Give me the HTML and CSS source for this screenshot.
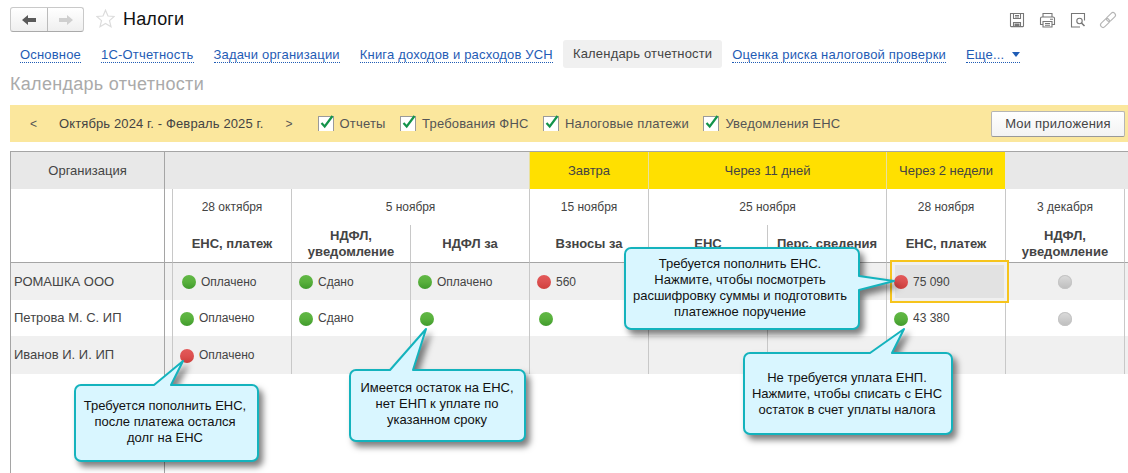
FILE: index.html
```html
<!DOCTYPE html>
<html lang="ru">
<head>
<meta charset="utf-8">
<title>Налоги</title>
<link rel="stylesheet" href="styles.css">
</head>
<body>
<header class="top">
  <div class="nav">
    <button class="nav-btn nav-back"><svg width="14" height="12" viewBox="0 0 14 12"><path d="M0 6 6 1v3h8v4H6v3z" fill="#5a5a5a"/></svg></button>
    <button class="nav-btn"><svg width="14" height="12" viewBox="0 0 14 12"><path d="M14 6 8 1v3H0v4h8v3z" fill="#cfcfcf"/></svg></button>
  </div>
  <svg class="star" width="19" height="19" viewBox="0 0 19 19"><path d="M9.500 1.200 12 7l6.200.5-4.700 4.100 1.500 6.100-5.500-3.300-5.500 3.300 1.500-6.100L.8 7.500 7 7z" fill="#fff" stroke="#dcdcdc" stroke-width="1.200"/></svg>
  <h1 class="title">Налоги</h1>
  <div class="tools">
    <svg width="16" height="16" viewBox="0 0 16 16" fill="none" stroke="#777" stroke-width="1.100"><path d="M1.500 1.500h13v12.500a.6.6 0 0 1-.6.6H2.100a.6.6 0 0 1-.6-.6z"/><path d="M4.500 1.500v5h7v-5M4.500 14.500v-4h7v4M6 3.500h4M6 5h4"/><rect x="5.500" y="11.500" width="5" height="3" fill="#777" stroke="none"/></svg>
    <svg width="17" height="16" viewBox="0 0 17 16" fill="none" stroke="#777" stroke-width="1.100"><path d="M4 5V1.500h9V5M4 12.500H1.500V6.500a1.500 1.500 0 0 1 1.500-1.500h11a1.500 1.500 0 0 1 1.500 1.500v6H13"/><path d="M4 9.500h9v5.500H4zM6 11.500h5M6 13.300h5M11 7.300h3"/></svg>
    <svg width="16" height="16" viewBox="0 0 16 16" fill="none" stroke="#777" stroke-width="1.100"><path d="M10 15H1.500V1.500h13v7"/><circle cx="9.500" cy="9" r="2.700"/><path d="m11.500 11 3 3" stroke-width="1.600"/></svg>
    <svg class="chain" width="16" height="16" viewBox="0 0 16 16" fill="none" stroke="#b5b5b5" stroke-width="1.100"><g transform="rotate(-45 8 8)"><rect x="-1.500" y="5.500" width="10.500" height="5" rx="2.500"/><rect x="7" y="5.500" width="10.500" height="5" rx="2.500"/></g></svg>
  </div>
</header>

<nav class="tabs">
  <div class="tab"><span class="link">Основное</span></div>
  <div class="tab"><span class="link">1С-Отчетность</span></div>
  <div class="tab"><span class="link">Задачи организации</span></div>
  <div class="tab"><span class="link">Книга доходов и расходов УСН</span></div>
  <div class="tab tab-active">Календарь отчетности</div>
  <div class="tab"><span class="link">Оценка риска налоговой проверки</span></div>
  <div class="tab"><span class="link link-more">Еще...<i class="caret"></i></span></div>
</nav>

<h2 class="heading">Календарь отчетности</h2>

<section class="bar">
  <span class="arrow">&lt;</span>
  <span class="period">Октябрь 2024 г. - Февраль 2025 г.</span>
  <span class="arrow arrow-next">&gt;</span>
  <label class="check"><svg class="box" width="18" height="18" viewBox="0 0 18 18"><rect x="0.500" y="3.500" width="15" height="15" fill="#fff" stroke="#9a9a9a"/><path d="m3.500 10 3.200 3.500L14.500 3" fill="none" stroke="#13934a" stroke-width="2.200"/></svg>Отчеты</label>
  <label class="check"><svg class="box" width="18" height="18" viewBox="0 0 18 18"><rect x="0.500" y="3.500" width="15" height="15" fill="#fff" stroke="#9a9a9a"/><path d="m3.500 10 3.200 3.500L14.500 3" fill="none" stroke="#13934a" stroke-width="2.200"/></svg>Требования ФНС</label>
  <label class="check"><svg class="box" width="18" height="18" viewBox="0 0 18 18"><rect x="0.500" y="3.500" width="15" height="15" fill="#fff" stroke="#9a9a9a"/><path d="m3.500 10 3.200 3.500L14.500 3" fill="none" stroke="#13934a" stroke-width="2.200"/></svg>Налоговые платежи</label>
  <label class="check"><svg class="box" width="18" height="18" viewBox="0 0 18 18"><rect x="0.500" y="3.500" width="15" height="15" fill="#fff" stroke="#9a9a9a"/><path d="m3.500 10 3.200 3.500L14.500 3" fill="none" stroke="#13934a" stroke-width="2.200"/></svg>Уведомления ЕНС</label>
  <button class="apps">Мои приложения</button>
</section>

<main class="cal">
  <div class="c hd dark org-h">Организация</div>
  <div class="c hd dark s4"></div>
  <div class="c hd hot">Завтра</div>
  <div class="c hd hot s2">Через 11 дней</div>
  <div class="c hd hot">Через 2 недели</div>
  <div class="c hd s2"></div>

  <div class="c dark r2 name-blank"></div>
  <div class="c dark r2 gut"></div>
  <div class="c date">28 октября</div>
  <div class="c date s2">5 ноября</div>
  <div class="c date">15 ноября</div>
  <div class="c date s2">25 ноября</div>
  <div class="c date">28 ноября</div>
  <div class="c date">3 декабря</div>
  <div class="c date"></div>

  <div class="c nm">ЕНС, платеж</div>
  <div class="c nm">НДФЛ, уведомление</div>
  <div class="c nm">НДФЛ за</div>
  <div class="c nm">Взносы за</div>
  <div class="c nm">ЕНС</div>
  <div class="c nm">Перс. сведения</div>
  <div class="c nm">ЕНС, платеж</div>
  <div class="c nm">НДФЛ, уведомление</div>
  <div class="c nm"></div>

  <div class="c dark org alt">РОМАШКА ООО</div>
  <div class="c dark alt"></div>
  <div class="c v alt wide"><i class="dot green"></i>Оплачено</div>
  <div class="c v alt"><i class="dot green"></i>Сдано</div>
  <div class="c v alt"><i class="dot green"></i>Оплачено</div>
  <div class="c v alt"><i class="dot red"></i>560</div>
  <div class="c v alt"></div>
  <div class="c v alt"></div>
  <div class="c v alt"><span class="focus"></span><i class="dot red"></i><span class="over">75 090</span></div>
  <div class="c v alt mid"><i class="dot grey"></i></div>
  <div class="c alt"></div>

  <div class="c dark org">Петрова М. С. ИП</div>
  <div class="c dark"></div>
  <div class="c v"><i class="dot green"></i>Оплачено</div>
  <div class="c v"><i class="dot green"></i>Сдано</div>
  <div class="c v wide"><i class="dot green"></i></div>
  <div class="c v wide"><i class="dot green"></i></div>
  <div class="c v"></div>
  <div class="c v"></div>
  <div class="c v"><i class="dot green"></i>43 380</div>
  <div class="c v mid"><i class="dot grey"></i></div>
  <div class="c"></div>

  <div class="c dark org alt">Иванов И. И. ИП</div>
  <div class="c dark alt"></div>
  <div class="c v alt"><i class="dot red"></i>Оплачено</div>
  <div class="c v alt"></div>
  <div class="c v alt"></div>
  <div class="c v alt"></div>
  <div class="c v alt"></div>
  <div class="c v alt"></div>
  <div class="c v alt"></div>
  <div class="c v alt"></div>
  <div class="c alt"></div>

  <div class="c dark"></div>
  <div class="c dark"></div>
</main>

<aside class="callout co-a">
  <svg width="200" height="110" viewBox="0 0 200 110"><path d="M7 26H80L109 2 97 26H178a6 6 0 0 1 6 6V96a6 6 0 0 1-6 6H7a6 6 0 0 1-6-6V32a6 6 0 0 1 6-6z"/></svg>
  <p class="co-text">Требуется пополнить ЕНС,<br>после платежа остался<br>долг на ЕНС</p>
</aside>
<aside class="callout co-b">
  <svg width="190" height="122" viewBox="0 0 190 122"><path d="M7 42H41L77 1 64 42H170a6 6 0 0 1 6 6V107a6 6 0 0 1-6 6H7a6 6 0 0 1-6-6V48a6 6 0 0 1 6-6z"/></svg>
  <p class="co-text">Имеется остаток на ЕНС,<br>нет ЕНП к уплате по<br>указанном сроку</p>
</aside>
<aside class="callout co-c">
  <svg width="222" height="115" viewBox="0 0 222 115"><path d="M7 25H127L161 1 149 25H203a6 6 0 0 1 6 6V100a6 6 0 0 1-6 6H7a6 6 0 0 1-6-6V31a6 6 0 0 1 6-6z"/></svg>
  <p class="co-text">Не требуется уплата ЕНП.<br>Нажмите, чтобы списать с ЕНС<br>остаток в счет уплаты налога</p>
</aside>
<aside class="callout co-d">
  <svg width="280" height="92" viewBox="0 0 280 92"><path d="M7 1H229a6 6 0 0 1 6 6V29L270 34 235 43V76a6 6 0 0 1-6 6H7a6 6 0 0 1-6-6V7a6 6 0 0 1 6-6z"/></svg>
  <p class="co-text">Требуется пополнить ЕНС.<br>Нажмите, чтобы посмотреть<br>расшифровку суммы и подготовить<br>платежное поручение</p>
</aside>
</body>
</html>
```
FILE: styles.css
```css
* { box-sizing: border-box; }
html, body { height: 100%; }
body {
  margin: 0;
  display: flex;
  flex-direction: column;
  overflow: hidden;
  position: relative;
  background: #fff;
  color: #444;
  font: 13px/16px "Liberation Sans", Arial, sans-serif;
}

/* top */
.top { flex: none; height: 40px; display: flex; align-items: flex-start; padding: 7px 12px 0 10px; }
.nav {
  display: flex; width: 74px; height: 25px;
  border: 1px solid #c9c9c9; border-bottom-color: #aaa; border-radius: 3px;
  background: linear-gradient(#fff, #efefef);
}
.nav-btn {
  flex: 1; padding: 0; border: 0; background: none;
  display: flex; align-items: center; justify-content: center;
}
.nav-back { flex: none; width: 37px; border-right: 1px solid #bbb; }
.star { margin: 2px 0 0 12px; }
.title { margin: 0 0 0 8px; font-size: 18px; line-height: 24px; font-weight: 400; color: #111; letter-spacing: .15px; }
.tools { margin-left: auto; display: flex; gap: 14px; padding-top: 5px; }
.chain { overflow: visible; }

/* tabs */
.tabs { flex: none; height: 28px; display: flex; padding-left: 10px; letter-spacing: .18px; }
.tab { padding: 0 10px; display: flex; align-items: center; white-space: nowrap; }
.tab-active { background: #f0f0f0; border-radius: 3px; }
.link { color: #1f5cb5; border-bottom: 1px dotted #1f5cb5; line-height: 15px; margin-top: 1px; }
.link-more { display: flex; align-items: center; gap: 8px; }
.caret { width: 0; height: 0; border: 4px solid transparent; border-top: 5px solid #1f5cb5; border-bottom: 0; }

.heading { flex: none; margin: 0; height: 37px; padding: 5px 0 0 10px; font-size: 18px; line-height: 22px; font-weight: 400; color: #aaa; letter-spacing: .3px; }

/* filter bar */
.bar { flex: none; height: 37px; margin-left: 10px; display: flex; align-items: center; padding: 0 3px 0 20px; background: #fbe79d; color: #555; letter-spacing: .12px; }
.arrow { width: 6px; font-size: 12px; }
.period { margin-left: 23px; color: #444; }
.arrow-next { margin-left: 22px; }
.check { display: flex; align-items: center; margin-left: 26px; letter-spacing: .18px; }
.check + .check { margin-left: 14.5px; }
.box { margin: -3px 4px 0 0; }
.apps {
  margin-left: auto; width: 134px; height: 26px; padding: 0;
  border: 1px solid #b5b5b5; border-bottom-color: #999; border-radius: 2px;
  background: linear-gradient(#fff, #f3f3f3);
  color: #444; font: inherit; letter-spacing: .2px;
}

/* table */
.cal {
  flex: 1; margin-top: 9px; min-height: 0;
  display: grid;
  grid-template-columns: 154px 8px repeat(8, 119px) 1fr;
  grid-template-rows: 37px 36px 38px 37px 36px 38px 1fr;
  border-top: 1px solid #a5a5a5;
  margin-left: 10px;
}
.c { border-left: 1px solid #c8c8c8; min-width: 0; }
.dark { border-left-color: #a5a5a5; }
.s2 { grid-column: span 2; }
.s4 { grid-column: span 4; }
.r2 { grid-row: span 2; border-bottom: 1px solid #a5a5a5; }
.hd { background: #e8e8e8; display: flex; align-items: center; justify-content: center; border-left-color: #e8e8e8; }
.hd.dark { border-left-color: #a5a5a5; }
.hot { background: #ffe000; border-left-color: #e8e0a0; }
.date { display: flex; align-items: center; justify-content: center; font-size: 12px; }
.nm {
  display: flex; align-items: center; justify-content: center;
  padding: 0 4px; text-align: center; line-height: 16px; font-weight: 700;
  border-bottom: 1px solid #a5a5a5;
}
.alt { background: #f0f0f0; }
.org { display: flex; align-items: center; padding-left: 3px; font-size: 13px; }
.v { display: flex; align-items: center; padding-left: 7px; font-size: 12px; position: relative; }
.wide { padding-left: 9px; }
.mid { justify-content: center; padding-left: 0; }
.dot {
  flex: none; width: 14px; height: 14px; margin: 1px 5px 0 0; border-radius: 50%;
  position: relative; z-index: 2;
}
.mid .dot { margin-right: 0; }
.green { background: linear-gradient(#62b846 0, #58b03c 50%, #3f9a2c 100%); }
.red { background: linear-gradient(#e35a5a 0, #dc4f4f 50%, #cf3f3c 100%); }
.grey { background: linear-gradient(#dcdcdc, #bdbdbd); box-shadow: inset 0 0 0 1px #c4c4c4; }
.over { position: relative; z-index: 2; }
.focus {
  position: absolute; left: 3px; top: -3px; width: 119px; height: 43px; z-index: 1;
  border: 2px solid #f6c41c;
  background: #e2e2e2;
  box-shadow: inset 0 0 0 3px #f0f0f0;
}

/* callouts */
.callout { position: absolute; margin: 0; color: #111; font-size: 13px; line-height: 16px; z-index: 3; }
.callout svg { display: block; overflow: visible; filter: drop-shadow(4px 5px 3px rgba(0,0,0,.5)); }
.callout path { fill: #d9f6ff; stroke: #14b3bd; stroke-width: 2; stroke-linejoin: round; }
.co-text { position: absolute; margin: 0; text-align: center; white-space: nowrap; }
.co-a { left: 74px; top: 359px; }
.co-a .co-text { left: 1px; width: 180px; top: 39px; }
.co-b { left: 349px; top: 328px; }
.co-b .co-text { left: 1px; width: 174px; top: 52px; }
.co-c { left: 743px; top: 328px; }
.co-c .co-text { left: 1px; width: 206px; top: 42px; }
.co-d { left: 624px; top: 247px; }
.co-d .co-text { left: 1px; width: 230px; top: 9px; }
```
